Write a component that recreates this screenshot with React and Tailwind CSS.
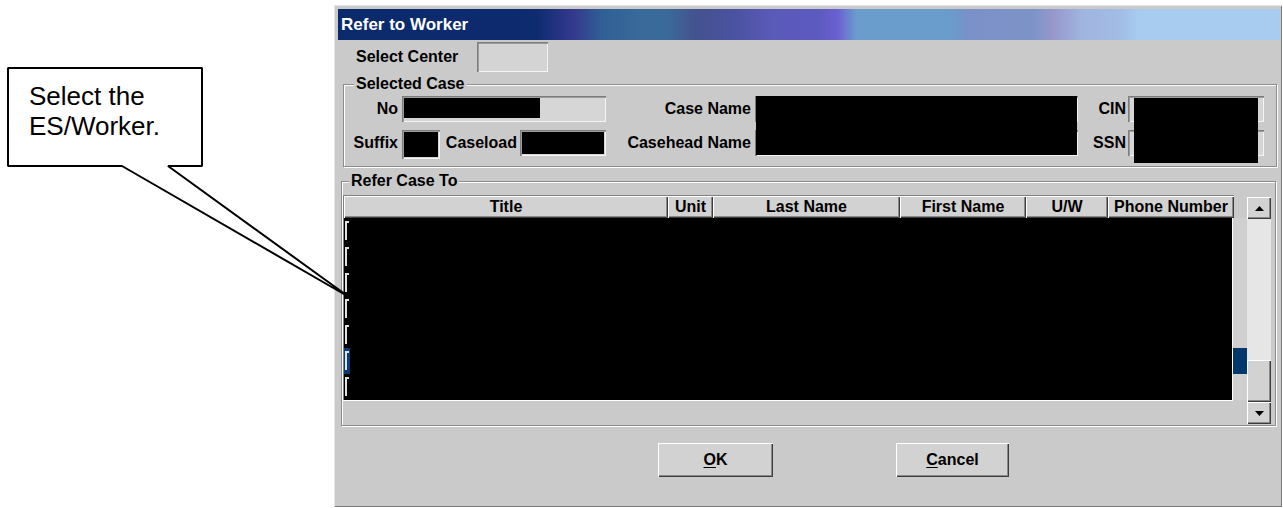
import React from "react";

// Win95-ish bevels
const raised =
  "shadow-[inset_1px_1px_0_#ffffff,inset_-1px_-1px_0_#3c3c3c,inset_-2px_-2px_0_#8a8a8a]";
const sunken =
  "shadow-[inset_1px_1px_0_#7c7c7c,inset_2px_2px_0_#9c9c9c,inset_-1px_-1px_0_#f4f4f4]";

const columns = [
  { label: "Title", w: "w-[324px]" },
  { label: "Unit", w: "w-[45px]" },
  { label: "Last Name", w: "w-[187px]" },
  { label: "First Name", w: "w-[126px]" },
  { label: "U/W", w: "w-[82px]" },
  { label: "Phone Number", w: "w-[126px]" },
];

const rows = [0, 1, 2, 3, 4, 5, 6];
const selectedRow = 5;

function Field({ className = "", children }) {
  return <div className={`h-[26px] bg-[#d6d6d6] p-[2px] ${sunken} ${className}`}>{children}</div>;
}

function Label({ className = "", children }) {
  return <span className={`shrink-0 text-right whitespace-nowrap ${className}`}>{children}</span>;
}

function ScrollButton({ down }) {
  return (
    <div className={`h-[22px] bg-[#d2d2d2] flex items-center justify-center ${raised}`}>
      <svg width="9" height="5" viewBox="0 0 9 5">
        {down ? <path d="M0 0H9L4.5 5Z" fill="#000" /> : <path d="M0 5H9L4.5 0Z" fill="#000" />}
      </svg>
    </div>
  );
}

function ListRow({ selected }) {
  return (
    <div className="flex h-[26px]">
      <div className={`w-[6px] ${selected ? "bg-[#0a3a70]" : "bg-black"}`}>
        <div className="ml-[1px] mt-[3px] h-[19px] w-[4px] border-l-2 border-t-2 border-[#e2e2e2]" />
      </div>
      <div className="w-[883px] bg-black border-r border-white" />
      <div className={`flex-1 ${selected ? "bg-[#00386e]" : "bg-[#cfcfcf]"}`} />
    </div>
  );
}

function DialogButton({ first, rest, className = "" }) {
  return (
    <button
      className={`h-[34px] bg-[#d2d2d2] text-[16px] font-bold text-black ${raised} ${className}`}
    >
      <span className="underline underline-offset-2">{first}</span>
      {rest}
    </button>
  );
}

export default function App() {
  return (
    <div className="relative w-[1283px] h-[508px] overflow-hidden bg-white font-['Liberation_Sans',Arial,sans-serif]">
      {/* dialog window */}
      <div className="ml-[334px] mt-[5px] w-[948px] h-[502px] bg-[#cacaca] pl-[4px] pr-[2px] pt-[4px] shadow-[inset_1px_1px_0_#e6e6e6,inset_-1px_-1px_0_#7a7a7a]">
        <div className="h-[31px] flex items-center pl-[3px] text-[17px] font-bold text-white bg-[linear-gradient(90deg,#0b2a6c_0%,#0d2b6e_21%,#35398e_25%,#2f5f95_28%,#3a6a9a_32%,#3a6a9a_35%,#44528e_38%,#4a52a0_42%,#5a5ab8_46%,#5c5ac0_51%,#6a60d0_53%,#6a9ccc_55%,#6a9ccc_65%,#7a90c8_67%,#7e94c8_74%,#9898cc_76%,#a0b4e0_79%,#a2bce6_83%,#a8ccf0_85%,#a8ccf0_100%)]">
          Refer to Worker
        </div>

        <div className="text-[16px] font-bold text-black leading-none">
          {/* center picker */}
          <div className="mt-[2px] flex items-center h-[30px]">
            <span className="ml-[18px] w-[121px]">Select Center</span>
            <div className={`w-[71px] h-[30px] bg-[#d4d4d4] ${sunken}`} />
          </div>

          {/* selected case */}
          <fieldset className="mt-[4px] ml-[5px] w-[934px] border border-[#8c8c8c] pb-[10px] shadow-[inset_1px_1px_0_#ffffff,1px_1px_0_#ffffff]">
            <legend className="ml-[10px] px-[2px] leading-4 bg-[#cacaca]">Selected Case</legend>
            <div className="relative mt-[4px]">
              <div className="flex items-center h-[26px]">
                <Label className="w-[58px] pr-[4px]">No</Label>
                <Field className="w-[204px]">
                  <div className="w-[136px] h-[20px] bg-black" />
                </Field>
                <Label className="w-[149px] pr-[4px]">Case Name</Label>
                <Field className="w-[323px]" />
                <Label className="w-[50px] pr-[2px]">CIN</Label>
                <Field className="w-[136px]" />
              </div>
              <div className="mt-[8px] flex items-center h-[26px]">
                <Label className="w-[58px] pr-[4px]">Suffix</Label>
                <Field className="w-[38px] h-[29px] self-start">
                  <div className="h-full bg-black -mb-[3px]" />
                </Field>
                <Label className="w-[80px] pr-[3px]">Caseload</Label>
                <Field className="w-[86px]">
                  <div className="h-full bg-black" />
                </Field>
                <Label className="w-[149px] pr-[4px]">Casehead Name</Label>
                <Field className="w-[323px]" />
                <Label className="w-[50px] pr-[2px]">SSN</Label>
                <Field className="w-[136px]" />
              </div>
              {/* redacted values */}
              <div className="absolute left-[412px] top-0 w-[321px] h-[59px] bg-black" />
              <div className="absolute left-[790px] top-[2px] w-[124px] h-[65px] bg-black" />
            </div>
          </fieldset>

          {/* worker list */}
          <fieldset className="mt-[6px] ml-[3px] w-[935px] border border-[#8c8c8c] shadow-[inset_1px_1px_0_#ffffff,1px_1px_0_#ffffff]">
            <legend className="ml-[7px] px-[2px] leading-4 bg-[#cacaca]">Refer Case To</legend>
            <div className="mt-[6px] pl-[1px] flex h-[230px]">
              <div className="w-[904px] flex flex-col">
                <div className="h-[1px] w-[891px] bg-[#808080]" />
                <div className="flex h-[22px] border-l border-[#808080]">
                  {columns.map((c) => (
                    <div
                      key={c.label}
                      className={`${c.w} h-full flex items-center justify-center bg-[#d2d2d2] ${raised}`}
                    >
                      {c.label}
                    </div>
                  ))}
                </div>
                <div className="border-l border-[#808080]">
                  {rows.map((r) => (
                    <ListRow key={r} selected={r === selectedRow} />
                  ))}
                </div>
                <div className="h-[1px] w-[890px] bg-white" />
              </div>
              <div className="mt-[2px] w-[24px] h-[227px] flex flex-col">
                <ScrollButton />
                <div className="flex-1 bg-[#e6e6e6]" />
                <div className={`h-[42px] bg-[#d2d2d2] ${raised}`} />
                <ScrollButton down />
              </div>
            </div>
          </fieldset>

          <div className="mt-[17px] ml-[320px] flex">
            <DialogButton first="O" rest="K" className="w-[115px]" />
            <DialogButton first="C" rest="ancel" className="ml-[123px] w-[113px]" />
          </div>
        </div>
      </div>

      {/* callout */}
      <svg className="absolute left-0 top-0" width="360" height="310" viewBox="0 0 360 310">
        <path
          d="M8 68H202V166H168L349 297L122 166H8Z"
          fill="#ffffff"
          stroke="#000000"
          strokeWidth="2"
          strokeLinejoin="bevel"
        />
      </svg>
      <div className="absolute left-[29px] top-[81px] text-[26px] leading-[30px] text-black">
        Select the
        <br />
        ES/Worker.
      </div>
    </div>
  );
}
